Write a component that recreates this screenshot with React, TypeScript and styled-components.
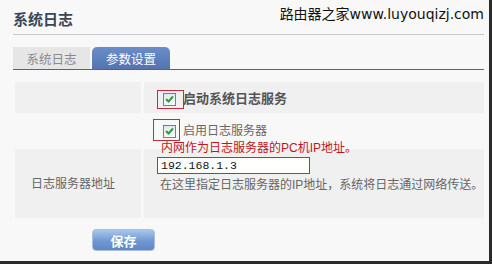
import styled, { createGlobalStyle } from 'styled-components';

const GlobalStyle = createGlobalStyle`
  html, body {
    margin: 0;
    padding: 0;
    background: #f8f8f8;
  }
  body {
    font-family: "Liberation Sans", "Noto Sans CJK SC", sans-serif;
  }
`;

const Page = styled.div`
  box-sizing: border-box;
  width: 492px;
  height: 264px;
  padding: 0 5px 0 13px;
  background: #f8f8f8;
  border-right: 3px solid #2a2a2a;
  border-bottom: 3px solid #2a2a2a;
  overflow: hidden;
`;

const Header = styled.div`
  display: flex;
  justify-content: space-between;
  height: 34px;
  border-bottom: 1px solid #c9c9c9;
`;

const Title = styled.h1`
  margin: 11px 0 0;
  font-size: 15px;
  line-height: 18px;
  font-weight: bold;
  color: #3b4556;
`;

const Watermark = styled.div`
  margin-top: 6px;
  font-family: "DejaVu Sans", "Noto Sans CJK SC", sans-serif;
  font-size: 14px;
  line-height: 17px;
  color: #111;
`;

const Tabs = styled.div`
  display: flex;
  gap: 2px;
  margin-top: 12px;
  height: 22px;
  border-bottom: 1px solid #5f636b;
`;

const Tab = styled.div<{ $active?: boolean }>`
  width: ${p => (p.$active ? 78 : 77)}px;
  display: flex;
  align-items: center;
  justify-content: center;
  font-size: 12.5px;
  color: ${p => (p.$active ? '#fff' : '#8a8a8a')};
  background: ${p => (p.$active ? 'linear-gradient(#6a8dc8, #5474b0)' : '#e6e6e6')};
  border-radius: ${p => (p.$active ? '5px 5px 0 0' : '0')};
`;

const Table = styled.div`
  display: grid;
  grid-template-columns: 126px 1fr;
  grid-template-rows: 31px 36px 69px;
  column-gap: 3px;
  margin: 12px 0 0 2px;
`;

const Cell = styled.div<{ $shade?: boolean }>`
  position: relative;
  background: ${p => (p.$shade ? '#f0f0f0' : 'transparent')};
  font-size: 12px;
  color: #666;
`;

const LabelCell = styled(Cell)`
  display: flex;
  align-items: center;
  padding-left: 16px;
  padding-bottom: 3px;
`;

const CheckRow = styled.label<{ $top: number }>`
  display: flex;
  align-items: center;
  gap: 7px;
  line-height: 14px;
  padding: ${p => p.$top}px 0 0 19px;
`;

const Box = styled.span`
  position: relative;
  box-sizing: border-box;
  width: 13px;
  height: 13px;
  border: 1px solid #6f7f90;
  background: linear-gradient(#e4e8ec, #fbfbfb);
  display: flex;
  align-items: center;
  justify-content: center;
`;

const Highlight = styled.span<{ $l: number; $t: number; $w: number; $h: number }>`
  position: absolute;
  left: ${p => p.$l}px;
  top: ${p => p.$t}px;
  width: ${p => p.$w}px;
  height: ${p => p.$h}px;
  border: 1px solid #c8283c;
  box-sizing: border-box;
`;

const CheckText = styled.span<{ $bold?: boolean }>`
  font-size: ${p => (p.$bold ? 13 : 12)}px;
  font-weight: ${p => (p.$bold ? 'bold' : 'normal')};
  color: ${p => (p.$bold ? '#555' : '#666')};
`;

const ValueCell = styled(Cell)`
  padding: 8px 0 0 13px;
`;

const Note = styled.div`
  position: absolute;
  left: 17px;
  top: -7px;
  font-size: 12px;
  line-height: 13px;
  color: #c0141e;
  white-space: nowrap;
`;

const Input = styled.input`
  box-sizing: border-box;
  display: block;
  width: 153px;
  height: 17px;
  margin: 0;
  padding: 0 3px;
  border: 1px solid #a13a4a;
  background: #fff;
  font-family: "Liberation Mono", monospace;
  font-size: 11.5px;
  color: #111;
  outline: none;
`;

const Hint = styled.div`
  margin: 4px 0 0 3px;
  font-size: 12px;
  line-height: 14px;
  color: #666;
  white-space: nowrap;
`;

const Footer = styled.div`
  padding: 11px 0 0 79px;
`;

const SaveButton = styled.button`
  box-sizing: border-box;
  width: 63px;
  height: 22px;
  border: 1px solid #a9c0de;
  border-radius: 4px;
  background: linear-gradient(#a8c6ea, #6f98d2 55%, #5d86c4);
  color: #fff;
  font-family: "Noto Sans CJK SC", sans-serif;
  font-size: 13px;
  font-weight: bold;
  padding: 0;
`;

const Check = () => (
  <svg width="9" height="8" viewBox="0 0 9 8">
    <path d="M1 4 L3.5 6.5 L8 1.5" fill="none" stroke="#2f9a3c" strokeWidth="2" />
  </svg>
);

const App = () => (
  <>
    <GlobalStyle />
    <Page>
      <Header>
        <Title>系统日志</Title>
        <Watermark>路由器之家www.luyouqizj.com</Watermark>
      </Header>
      <Tabs>
        <Tab>系统日志</Tab>
        <Tab $active>参数设置</Tab>
      </Tabs>
      <Table>
        <Cell $shade />
        <Cell $shade>
          <CheckRow $top={10}>
            <Box>
              <Check />
              <Highlight $l={-7} $t={-4} $w={27} $h={19} />
            </Box>
            <CheckText $bold>启动系统日志服务</CheckText>
          </CheckRow>
        </Cell>
        <Cell />
        <Cell>
          <CheckRow $top={11}>
            <Box>
              <Check />
              <Highlight $l={-11} $t={-7} $w={27} $h={22} />
            </Box>
            <CheckText>启用日志服务器</CheckText>
          </CheckRow>
        </Cell>
        <LabelCell $shade>日志服务器地址</LabelCell>
        <ValueCell $shade>
          <Note>内网作为日志服务器的PC机IP地址。</Note>
          <Input defaultValue="192.168.1.3" />
          <Hint>在这里指定日志服务器的IP地址，系统将日志通过网络传送。</Hint>
        </ValueCell>
      </Table>
      <Footer>
        <SaveButton>保存</SaveButton>
      </Footer>
    </Page>
  </>
);

export default App;
